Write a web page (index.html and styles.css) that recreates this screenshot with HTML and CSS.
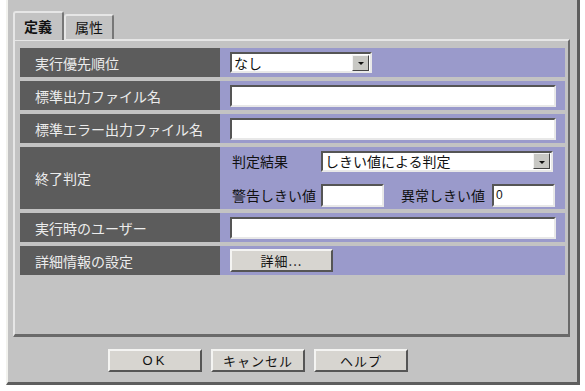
FILE: index.html
```html
<!DOCTYPE html>
<html lang="ja">
<head>
    <meta charset="UTF-8">
    <title>定義</title>
    <link rel="stylesheet" href="styles.css">
</head>
<body>
    <div class="window">
        <div class="tabs">
            <div class="tab active">定義</div>
            <div class="tab">属性</div>
        </div>

        <div class="panel">
            <div class="row">
                <div class="label">実行優先順位</div>
                <div class="value">
                    <div class="select small"><span>なし</span><i class="drop"></i></div>
                </div>
            </div>
            <div class="row">
                <div class="label">標準出力ファイル名</div>
                <div class="value"><div class="field wide"></div></div>
            </div>
            <div class="row">
                <div class="label">標準エラー出力ファイル名</div>
                <div class="value"><div class="field wide"></div></div>
            </div>
            <div class="row tall">
                <div class="label">終了判定</div>
                <div class="value stack">
                    <div class="line">
                        <span class="cap">判定結果</span>
                        <div class="select long"><span>しきい値による判定</span><i class="drop"></i></div>
                    </div>
                    <div class="line">
                        <span class="cap">警告しきい値</span>
                        <div class="field num"></div>
                        <span class="cap second">異常しきい値</span>
                        <div class="field num"><span>0</span></div>
                    </div>
                </div>
            </div>
            <div class="row">
                <div class="label">実行時のユーザー</div>
                <div class="value"><div class="field wide"></div></div>
            </div>
            <div class="row">
                <div class="label">詳細情報の設定</div>
                <div class="value"><div class="btn detail">詳細...</div></div>
            </div>
        </div>

        <div class="buttons">
            <div class="btn ok">OK</div>
            <div class="btn">キャンセル</div>
            <div class="btn">ヘルプ</div>
        </div>
    </div>
</body>
</html>
```

FILE: styles.css
```css
body {
    margin: 0;
    background: #ffffff;
    font-family: "Noto Sans CJK JP", "Noto Sans", sans-serif;
    font-size: 14px;
    color: #111;
}

.window {
    margin-left: 6px;
    width: 569px;
    height: 371px;
    padding-top: 11px;
    background: #c3c3c3;
    border-left: 2px solid #f2f2ee;
    border-right: 3px solid #5e5e5e;
    border-bottom: 3px solid #5e5e5e;
    display: flex;
    flex-direction: column;
}

/* tabs */
.tabs {
    display: flex;
    align-items: flex-end;
    padding-left: 5px;
    height: 28px;
}

.tab {
    height: 23px;
    padding: 0 9px;
    line-height: 23px;
    background: #c3c3c3;
    border-top: 2px solid #e6e6e6;
    border-left: 2px solid #e6e6e6;
    border-right: 2px solid #777;
    border-radius: 3px 3px 0 0;
}

.tab.active {
    height: 27px;
    line-height: 27px;
    font-weight: bold;
    padding: 0 10px 0 9px;
    position: relative;
    top: 1px;
}

/* panel */
.panel {
    margin-left: 5px;
    width: 545px;
    height: 286px;
    padding: 7px 3px 0 5px;
    border-top: 2px solid #e6e6e6;
    border-left: 2px solid #e6e6e6;
    border-right: 2px solid #6a6a6a;
    border-bottom: 3px solid #6a6a6a;
    display: flex;
    flex-direction: column;
    gap: 4px;
}

.row {
    display: flex;
    height: 29px;
}

.row.tall {
    height: 62px;
}

.label {
    width: 185px;
    padding-left: 15px;
    display: flex;
    align-items: center;
    background: #5c5c5c;
    color: #ececec;
}

.value {
    flex: 1;
    display: flex;
    align-items: center;
    padding-left: 10px;
    background: #9a9acb;
}

.value.stack {
    flex-direction: column;
    align-items: stretch;
    justify-content: center;
    gap: 13px;
    padding-left: 12px;
}

.line {
    display: flex;
    align-items: center;
    height: 21px;
}

.cap {
    width: 89px;
}

.cap.second {
    width: 91px;
    margin-left: 17px;
}

/* inputs */
.field,
.select {
    height: 17px;
    background: #fff;
    border-top: 2px solid #555;
    border-left: 2px solid #555;
    border-right: 2px solid #e8e8e8;
    border-bottom: 2px solid #e8e8e8;
    display: flex;
    align-items: center;
}

.field.wide {
    width: 322px;
    height: 18px;
}

.field.num {
    width: 57px;
    height: 19px;
    font-family: "Liberation Sans", sans-serif;
    font-size: 12px;
    padding-left: 2px;
}

.select span {
    flex: 1;
    padding-left: 2px;
}

.select.small {
    width: 138px;
}

.select.long {
    width: 228px;
}

.drop {
    width: 15px;
    height: 14px;
    margin-right: 1px;
    background: #c8c8c4;
    border-top: 1px solid #f4f4f4;
    border-left: 1px solid #f4f4f4;
    border-right: 1px solid #444;
    border-bottom: 1px solid #444;
    display: flex;
    align-items: center;
    justify-content: center;
}

.drop::after {
    content: '';
    border-top: 3px solid #111;
    border-left: 3px solid transparent;
    border-right: 3px solid transparent;
    margin-top: 2px;
}

/* buttons */
.btn {
    width: 90px;
    height: 19px;
    display: flex;
    align-items: center;
    justify-content: center;
    background: #d7d5d0;
    border-top: 2px solid #f4f4f2;
    border-left: 2px solid #f4f4f2;
    border-right: 2px solid #555;
    border-bottom: 2px solid #555;
    font-size: 13px;
    letter-spacing: 1px;
}

.btn.detail {
    width: 99px;
}

.btn.ok {
    font-family: "Liberation Sans", sans-serif;
    letter-spacing: 3px;
}

.buttons {
    display: flex;
    gap: 9px;
    padding-left: 100px;
    margin-top: 12px;
}
```
